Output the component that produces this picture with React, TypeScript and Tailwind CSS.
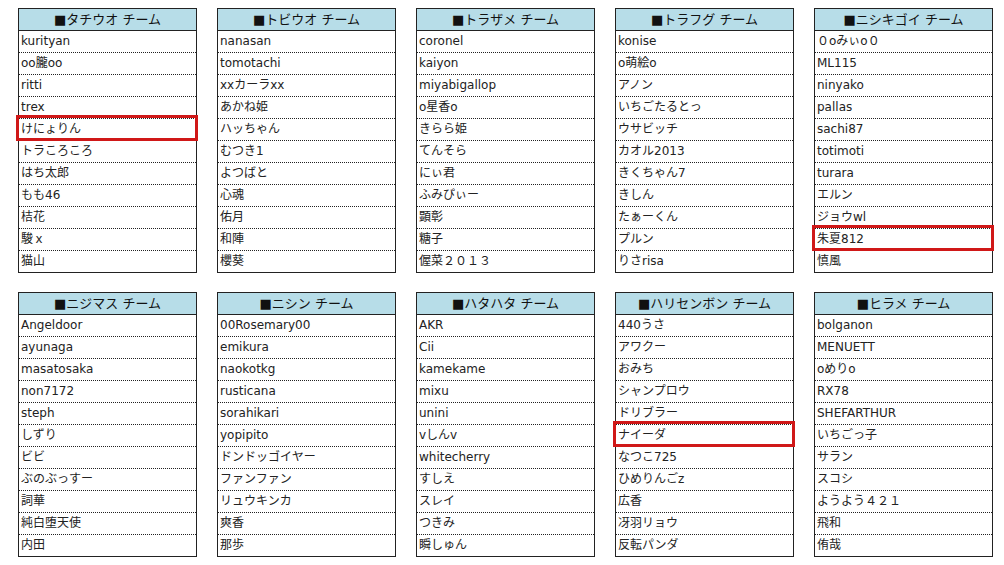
const teams: { name: string; members: string[]; mark?: number }[] = [
  {
    name: 'タチウオ',
    members: ['kurityan', 'oo朧oo', 'ritti', 'trex', 'けにょりん', 'トラころころ', 'はち太郎', 'もも46', '桔花', '駿ｘ', '猫山'],
    mark: 4,
  },
  {
    name: 'トビウオ',
    members: ['nanasan', 'tomotachi', 'xxカーラxx', 'あかね姫', 'ハッちゃん', 'むつき1', 'よつばと', '心魂', '佑月', '和陣', '櫻葵'],
  },
  {
    name: 'トラザメ',
    members: ['coronel', 'kaiyon', 'miyabigallop', 'o星香o', 'きらら姫', 'てんそら', 'にぃ君', 'ふみぴぃー', '顕彰', '糖子', '偓菜２０１３'],
  },
  {
    name: 'トラフグ',
    members: ['konise', 'o萌絵o', 'アノン', 'いちごたるとっ', 'ウサビッチ', 'カオル2013', 'きくちゃん7', 'きしん', 'たぁーくん', 'プルン', 'りさrisa'],
  },
  {
    name: 'ニシキゴイ',
    members: ['０oみぃo０', 'ML115', 'ninyako', 'pallas', 'sachi87', 'totimoti', 'turara', 'エルン', 'ジョウwl', '朱夏812', '慎風'],
    mark: 9,
  },
  {
    name: 'ニジマス',
    members: ['Angeldoor', 'ayunaga', 'masatosaka', 'non7172', 'steph', 'しずり', 'ビビ', 'ぶのぶっすー', '詞華', '純白堕天使', '内田'],
  },
  {
    name: 'ニシン',
    members: ['00Rosemary00', 'emikura', 'naokotkg', 'rusticana', 'sorahikari', 'yopipito', 'ドンドッゴイヤー', 'ファンファン', 'リュウキンカ', '爽香', '那歩'],
  },
  {
    name: 'ハタハタ',
    members: ['AKR', 'Cii', 'kamekame', 'mixu', 'unini', 'vしんv', 'whitecherry', 'すしえ', 'スレイ', 'つきみ', '瞬しゅん'],
  },
  {
    name: 'ハリセンボン',
    members: ['440うさ', 'アワクー', 'おみち', 'シャンプロウ', 'ドリブラー', 'ナイーダ', 'なつこ725', 'ひめりんごz', '広香', '冴羽リョウ', '反転パンダ'],
    mark: 5,
  },
  {
    name: 'ヒラメ',
    members: ['bolganon', 'MENUETT', 'oめりo', 'RX78', 'SHEFARTHUR', 'いちごっ子', 'サラン', 'スコシ', 'ようよう４２１', '飛和', '侑哉'],
  },
];

function TeamTable({ name, members, mark }: { name: string; members: string[]; mark?: number }) {
  return (
    <div className="w-[179px] border border-[#222] bg-white">
      <div className="h-[22px] border-b border-[#222] bg-[#b7dde8] text-center text-[13px] leading-[21px] text-[#111]">
        ■{name} チーム
      </div>
      {members.map((m, i) => {
        const last = i === members.length - 1;
        return (
          <div
            key={m}
            className={
              'relative pl-[2px] text-[12px] leading-[21px] text-[#222] ' +
              (last ? 'h-[21px]' : 'h-[22px] border-b border-dotted border-[#222]')
            }
          >
            {m}
            {mark === i && (
              <div className="pointer-events-none absolute -left-[3px] -right-[2px] -top-[4px] -bottom-[1px] border-[3px] border-[#d01818]" />
            )}
          </div>
        );
      })}
    </div>
  );
}

export default function App() {
  return (
    <div
      className="min-h-[565px] w-[1004px] bg-white pl-[18px] pt-[8px]"
      style={{ fontFamily: '"DejaVu Sans", "Noto Sans CJK JP", sans-serif' }}
    >
      <div className="grid grid-cols-[repeat(5,179px)] gap-x-[20px] gap-y-[19px]">
        {teams.map((t) => (
          <TeamTable key={t.name} {...t} />
        ))}
      </div>
    </div>
  );
}
